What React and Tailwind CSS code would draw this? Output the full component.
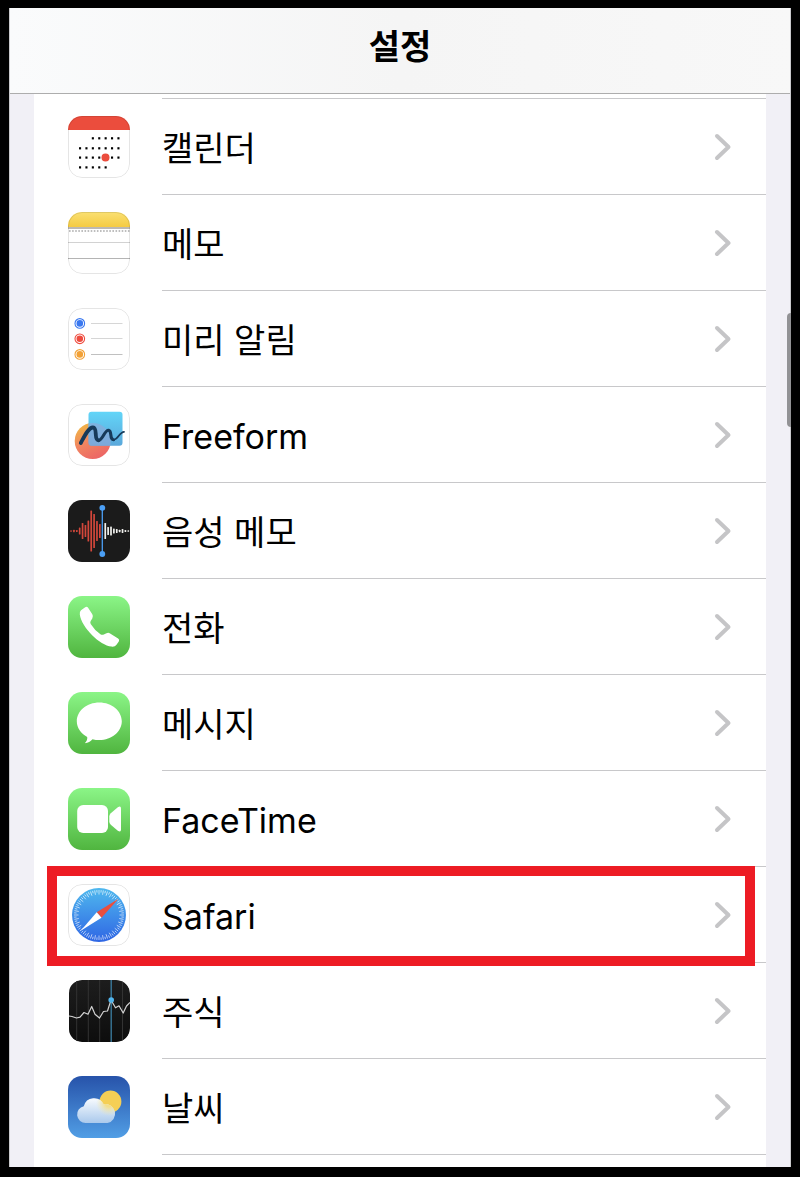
import React from "react";

const RED_BARS = [1.5, 2.5, 2, 7, 16, 12, 21, 41, 34, 20, 14];
const WHITE_BARS = [16, 8, 9, 5, 4, 2.5, 4, 2, 1.5];

// [y, first column, last column]
const CALENDAR_ROWS = [
  [22.3, 2, 6],
  [32.3, 0, 6],
  [41.6, 0, 6],
  [51.4, 0, 4],
];

function IconBase({ outline, children }) {
  return (
    <svg viewBox="0 0 62 62" className="h-[62px] w-[62px] shrink-0 overflow-hidden rounded-[14px]" aria-hidden="true">
      {children}
      {outline && (
        <rect x="0.5" y="0.5" width="61" height="61" rx="13.5" fill="none" stroke="#000" strokeOpacity="0.1" />
      )}
    </svg>
  );
}

function GreenIcon({ id, children }) {
  return (
    <IconBase>
      <linearGradient id={id} x1="0" y1="0" x2="0" y2="1">
        <stop offset="0" stopColor="#8bf587" />
        <stop offset="1" stopColor="#50b53f" />
      </linearGradient>
      <rect width="62" height="62" fill={`url(#${id})`} />
      {children}
    </IconBase>
  );
}

function CalendarIcon() {
  return (
    <IconBase outline>
      <rect width="62" height="62" fill="#fff" />
      <rect width="62" height="14" fill="#eb4d3d" />
      {CALENDAR_ROWS.map(([y, from, to]) =>
        Array.from({ length: to - from + 1 }, (_, i) => (
          <rect key={`${y}-${i}`} x={11 + (from + i) * 6.4} y={y - 1.1} width="2.1" height="2.2" />
        ))
      )}
      <circle cx="37.5" cy="41.5" r="4" fill="#eb4d3d" />
    </IconBase>
  );
}

function NotesIcon() {
  return (
    <IconBase outline>
      <linearGradient id="notes" x1="0" y1="0" x2="0" y2="1">
        <stop offset="0" stopColor="#fae072" />
        <stop offset="1" stopColor="#f5cb42" />
      </linearGradient>
      <rect width="62" height="62" fill="#fff" />
      <rect width="62" height="15" fill="url(#notes)" />
      <rect y="15" width="62" height="2" fill="#bdb9b1" />
      <path d="M1 19H62" stroke="#a9a9a9" strokeWidth="1.6" strokeDasharray="1.6 1.5" />
      <path d="M0 30.5H62" stroke="#d2d2d2" />
      <path d="M0 46.5H62" stroke="#b4b4b4" />
    </IconBase>
  );
}

function RemindersIcon() {
  return (
    <IconBase outline>
      <rect width="62" height="62" fill="#fff" />
      {[["#3a78f0", 15.4], ["#ee4c3f", 30.8], ["#f2a136", 46.4]].map(([color, y]) => (
        <g key={color}>
          <circle cx="11.8" cy={y} r="3.3" fill={color} />
          <circle cx="11.8" cy={y} r="4.8" fill="none" stroke={color} strokeWidth="1.1" />
        </g>
      ))}
      <path d="M23 15.5H54.5M23 30.5H54.5" stroke="#d6d6d6" />
      <path d="M23 46.5H54.5" stroke="#c0c0c0" />
    </IconBase>
  );
}

function FreeformIcon() {
  return (
    <IconBase outline>
      <linearGradient id="ffCircle" x1="0.1" y1="0" x2="0.6" y2="1">
        <stop offset="0" stopColor="#f0bd40" />
        <stop offset="0.5" stopColor="#f18760" />
        <stop offset="1" stopColor="#ec6665" />
      </linearGradient>
      <linearGradient id="ffSquare" x1="0" y1="0" x2="0" y2="1">
        <stop offset="0" stopColor="#62d5f8" />
        <stop offset="1" stopColor="#5ba8db" />
      </linearGradient>
      <clipPath id="ffClip">
        <rect x="20.5" y="7.7" width="34" height="34" rx="3" />
      </clipPath>
      <rect width="62" height="62" fill="#fff" />
      <circle cx="24.7" cy="37" r="18" fill="url(#ffCircle)" />
      <rect x="20.5" y="7.7" width="34" height="34" rx="3" fill="url(#ffSquare)" />
      <circle cx="24.7" cy="37" r="18" fill="#8fa9d8" fillOpacity="0.65" clipPath="url(#ffClip)" />
      <g fill="none" stroke="#173a5a" strokeLinecap="round" strokeLinejoin="round">
        <path d="M12.8 39C16 33 20.5 23.3 25 23.5C30 23.8 25.5 36 30.5 36.3" strokeWidth="3.8" />
        <path d="M30.5 36.3C35 36.5 36.5 25.5 40.7 26.3C44.5 27.2 41 35.5 45.5 35.8" strokeWidth="3.1" />
        <path d="M45.5 35.8C50 35.8 51.5 28 56 27.8" strokeWidth="1.8" />
      </g>
    </IconBase>
  );
}

function VoiceMemosIcon() {
  return (
    <IconBase>
      <rect width="62" height="62" fill="#1b1b1b" />
      {RED_BARS.map((h, i) => (
        <rect key={i} x={2.2 + i * 2.88} y={31 - h / 2} width="1.7" height={h} rx="0.6" fill="#d3473b" />
      ))}
      {WHITE_BARS.map((h, i) => (
        <rect key={i} x={36.4 + i * 2.88} y={31 - h / 2} width="1.7" height={h} rx="0.6" fill="#f1f1ee" />
      ))}
      <path d="M34.3 8V54" stroke="#4b9ff5" strokeWidth="1.3" />
      <circle cx="34.3" cy="7.8" r="2.9" fill="#4b9ff5" />
      <circle cx="34.3" cy="54" r="2.9" fill="#4b9ff5" />
    </IconBase>
  );
}

function PhoneIcon() {
  return (
    <GreenIcon id="phone">
      <path
        d="M13 14.2L17.2 11.3Q18.9 10.2 20.1 11.8L24.3 18.2Q25.7 20.4 24.3 22.6L22.8 24.8Q21.8 26.4 22.7 28Q26.5 34.2 32.4 38.2Q34 39.3 35.8 38.5L38.5 37.2Q40.4 36.3 42.1 37.4L50.1 42.4Q51.9 43.6 50.8 45.4L48.3 49Q46.8 51 43.5 50.6C32 49.5 13.5 31.500 11.8 18.5Q11.500 15.500 13 14.200Z"
        fill="#fff"
      />
    </GreenIcon>
  );
}

function MessagesIcon() {
  return (
    <GreenIcon id="messages">
      <path
        d="M31.3 10.500C43.8 10.500 53.800 18.900 53.800 29.300S43.800 48.100 31.300 48.100C28.900 48.100 26.600 47.800 24.500 47.200C22.600 49.300 20 51 16.800 51.200C18.700 49.200 19.600 47 19.200 44.900C12.900 41.500 8.800 35.800 8.800 29.300C8.800 18.900 18.800 10.500 31.300 10.500Z"
        fill="#fff"
      />
    </GreenIcon>
  );
}

function FaceTimeIcon() {
  return (
    <GreenIcon id="facetime">
      <rect x="9.2" y="17" width="30.800" height="28" rx="6" fill="#fff" />
      <path d="M41.300 28.500Q41.300 26.500 42.800 25.200L49.800 19.300Q53 17.300 53 20.500V41.500Q53 44.700 49.800 42.700L42.800 36.800Q41.300 35.500 41.300 33.500Z" fill="#fff" />
    </GreenIcon>
  );
}

function SafariIcon() {
  return (
    <IconBase outline>
      <linearGradient id="safari" x1="0" y1="0" x2="0" y2="1">
        <stop offset="0" stopColor="#4fb8ee" />
        <stop offset="1" stopColor="#2f66e4" />
      </linearGradient>
      <rect width="62" height="62" fill="#fff" />
      <circle cx="31" cy="31" r="27" fill="url(#safari)" />
      {Array.from({ length: 72 }, (_, i) => (
        <path
          key={i}
          d={i % 2 ? "M31 6V8.5" : "M31 6V10.500"}
          stroke="#fff"
          strokeWidth="0.8"
          strokeOpacity="0.75"
          transform={`rotate(${i * 5} 31 31)`}
        />
      ))}
      <path d="M50.500 14.800L28.700 28.300L33.500 33.800Z" fill="#ea4e3d" />
      <path d="M12.700 46.800L28.700 28.300L33.500 33.800Z" fill="#fff" />
    </IconBase>
  );
}

function StocksIcon() {
  return (
    <IconBase>
      <linearGradient id="stocks" x1="0" y1="0" x2="0" y2="1">
        <stop offset="0" stopColor="#1d1d1d" />
        <stop offset="1" stopColor="#0d0d0d" />
      </linearGradient>
      <rect x="1" width="61" height="62" rx="13" fill="url(#stocks)" />
      <path d="M8.700 0V62M20.300 0V62M31.700 0V62M54.500 0V62" stroke="#333" />
      <path d="M43.200 0V62" stroke="#3c7fa3" strokeWidth="1.300" />
      <path
        d="M1 36L4 36.500L8.500 38L12 37.200L16 32.500L20 34.200L23.700 26.500L27 34.200L31.500 38L35.500 31.500L39.500 31L43 20L47.500 27.800L51 25.800L55.200 33L58.500 26L62 22.500"
        fill="none"
        stroke="#d2d2d2"
        strokeWidth="1.200"
        strokeLinejoin="round"
      />
      <circle cx="43.200" cy="20" r="2.800" fill="#51b5ed" />
    </IconBase>
  );
}

function WeatherIcon() {
  return (
    <IconBase>
      <linearGradient id="sky" x1="0" y1="0" x2="0" y2="1">
        <stop offset="0" stopColor="#2753aa" />
        <stop offset="1" stopColor="#519ee5" />
      </linearGradient>
      <linearGradient id="cloud" x1="0" y1="0" x2="0" y2="1">
        <stop offset="0" stopColor="#f8fbfe" />
        <stop offset="1" stopColor="#aac9ec" />
      </linearGradient>
      <radialGradient id="glow" gradientUnits="userSpaceOnUse" cx="41" cy="27" r="13">
        <stop offset="0.300" stopColor="#f5dd7f" stopOpacity="0.900" />
        <stop offset="1" stopColor="#f0e9bb" stopOpacity="0" />
      </radialGradient>
      <clipPath id="cloudClip">
        <path d="M17.800 47A8.500 8.500 0 0 1 15.800 30.200A10.600 10.600 0 0 1 35.700 28.300A9.500 9.500 0 0 1 39.500 47Z" />
      </clipPath>
      <rect width="62" height="62" fill="url(#sky)" />
      <circle cx="42.500" cy="25.500" r="10.900" fill="#f5cf55" />
      <path d="M17.800 47A8.500 8.500 0 0 1 15.800 30.200A10.600 10.600 0 0 1 35.700 28.300A9.500 9.500 0 0 1 39.500 47Z" fill="url(#cloud)" />
      <circle cx="41" cy="27" r="13" fill="url(#glow)" clipPath="url(#cloudClip)" />
    </IconBase>
  );
}

const APPS = [
  { id: "calendar", label: "캘린더", icon: CalendarIcon },
  { id: "notes", label: "메모", icon: NotesIcon },
  { id: "reminders", label: "미리 알림", icon: RemindersIcon },
  { id: "freeform", label: "Freeform", icon: FreeformIcon },
  { id: "voice-memos", label: "음성 메모", icon: VoiceMemosIcon },
  { id: "phone", label: "전화", icon: PhoneIcon },
  { id: "messages", label: "메시지", icon: MessagesIcon },
  { id: "facetime", label: "FaceTime", icon: FaceTimeIcon },
  { id: "safari", label: "Safari", icon: SafariIcon, highlighted: true },
  { id: "stocks", label: "주식", icon: StocksIcon },
  { id: "weather", label: "날씨", icon: WeatherIcon },
];

function AppRow({ id, label, icon: Icon, highlighted }) {
  return (
    <li className="relative">
      <a href={`#${id}`} className="flex h-24 items-center gap-8 pl-[34px]">
        <Icon />
        <span className="flex h-full flex-1 items-center justify-between border-b border-[#c8c8ca] pr-[34px]">
          <span className="pt-1 text-[34px] leading-[48px]">{label}</span>
          <svg viewBox="0 0 18 28" className="h-7 w-[18px]" fill="none" aria-hidden="true">
            <path d="M3 3L14.500 14L3 25" stroke="#c5c5c7" strokeWidth="4" strokeLinecap="round" strokeLinejoin="round" />
          </svg>
        </span>
      </a>
      {highlighted && (
        <div className="pointer-events-none absolute -top-px -bottom-[3px] left-[13px] right-[11px] z-10 border-[10px] border-[#ed1c24]" />
      )}
    </li>
  );
}

export default function App() {
  return (
    <div className="flex min-h-screen flex-col bg-black px-[9px] pt-2 pb-[10px] font-['Inter','Noto_Sans_CJK_KR',sans-serif] text-black">
      <div className="relative flex flex-1 flex-col border-x border-[#c9c9cc] bg-[#f1f0f6]">
        <header className="flex h-[86px] items-center justify-center border-b border-[#adadad] bg-linear-to-r from-[#fafbfc] via-[#f5f5f5] to-[#f8f8f8] pb-2">
          <h1 className="text-[34px] leading-[48px] font-bold">설정</h1>
        </header>
        <main className="mx-6 flex-1 bg-white pb-3">
          <div className="ml-32 h-[5px] border-b border-[#c8c8ca]" />
          <ul>
            {APPS.map((app) => (
              <AppRow key={app.id} {...app} />
            ))}
          </ul>
        </main>
        {/* scroll thumb */}
        <div className="absolute top-[305px] -right-px h-[114px] w-1 rounded-l bg-[#929295]" />
      </div>
    </div>
  );
}
